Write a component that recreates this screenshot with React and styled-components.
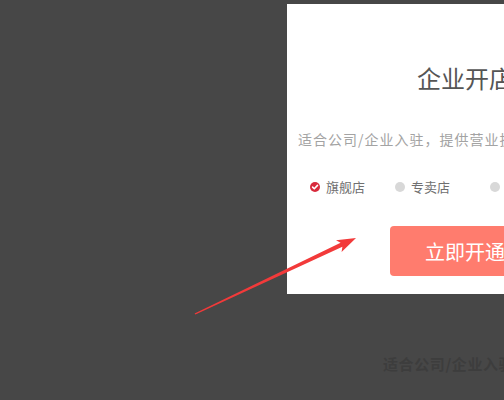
import React from "react"
import styled, { createGlobalStyle } from "styled-components"

const GlobalStyle = createGlobalStyle`
  html, body {
    margin: 0;
    padding: 0;
    background: #474747;
    overflow: hidden;
  }
  body {
    font-family: "Noto Sans CJK SC", "Noto Sans", sans-serif;
  }
`

const stores = [
  { label: "旗舰店", checked: true, width: 85 },
  { label: "专卖店", checked: false, width: 95 },
  { label: "专营店", checked: false, width: 95 },
]

const App = () => {
  return (
    <Page>
      <GlobalStyle />
      <Stage>
        <Card>
          <Title>企业开店</Title>
          <Subtitle>适合公司/企业入驻，提供营业执照等相关资质</Subtitle>
          <RadioRow>
            {stores.map((s) => (
              <RadioItem key={s.label} $w={s.width}>
                <Dot $checked={s.checked}>
                  {s.checked && (
                    <svg width="10" height="10" viewBox="0 0 10 10">
                      <path
                        d="M2.6 5.1 L4.3 6.8 L7.5 3.4"
                        fill="none"
                        stroke="#fff"
                        strokeWidth="1.6"
                        strokeLinecap="round"
                        strokeLinejoin="round"
                      />
                    </svg>
                  )}
                </Dot>
                <Label>{s.label}</Label>
              </RadioItem>
            ))}
          </RadioRow>
          <OpenButton>立即开通</OpenButton>
        </Card>
      </Stage>
      <Behind>适合公司/企业入驻，提供营业执照等相关资质</Behind>
      <Arrow viewBox="0 0 504 400" width="504" height="400">
        <polygon
          points="194.6,313.4 340.6,242.8 336,240.2 356,238 341.6,252 342.4,246.8 195.4,314.6"
          fill="#f23a3a"
        />
      </Arrow>
    </Page>
  )
}

const Page = styled.div`
  position: relative;
  width: 504px;
  height: 400px;
  overflow: hidden;
  background: #474747;
`

const Stage = styled.div`
  padding: 4px 0 0 287px;
`

const Card = styled.div`
  width: 356px;
  height: 290px;
  box-sizing: border-box;
  padding-top: 62px;
  background: #fff;
  display: flex;
  flex-direction: column;
`

const Title = styled.h2`
  margin: 0;
  font-size: 24px;
  line-height: 24px;
  font-weight: 400;
  color: #555;
  text-align: center;
`

const Subtitle = styled.p`
  margin: 42px 0 0 11px;
  font-size: 14px;
  line-height: 14px;
  letter-spacing: 1px;
  color: #a3a3a3;
  white-space: nowrap;
`

const RadioRow = styled.div`
  display: flex;
  align-items: center;
  margin: 34px 0 0 23px;
  height: 14px;
`

const RadioItem = styled.div`
  display: flex;
  align-items: center;
  gap: 6px;
  flex: 0 0 ${(p) => p.$w}px;
`

const Dot = styled.span`
  width: 10px;
  height: 10px;
  border-radius: 50%;
  background: ${(p) => (p.$checked ? "#d82a3c" : "#d8d8d8")};
  display: flex;
  align-items: center;
  justify-content: center;
`

const Label = styled.span`
  font-size: 13px;
  line-height: 14px;
  color: #707070;
  white-space: nowrap;
`

const OpenButton = styled.button`
  margin: 32px 0 0 103px;
  width: 150px;
  height: 50px;
  border: none;
  border-radius: 4px;
  background: #ff7c6e;
  color: #fff;
  font-family: inherit;
  font-size: 20px;
  white-space: nowrap;
  padding: 0;
  cursor: pointer;
`

const Behind = styled.div`
  margin: 62px 0 0 383px;
  font-size: 15px;
  line-height: 15px;
  letter-spacing: 0.6px;
  font-weight: 700;
  color: #3d3d3d;
  white-space: nowrap;
`

const Arrow = styled.svg`
  position: absolute;
  left: 0;
  top: 0;
  pointer-events: none;
`

export default App
